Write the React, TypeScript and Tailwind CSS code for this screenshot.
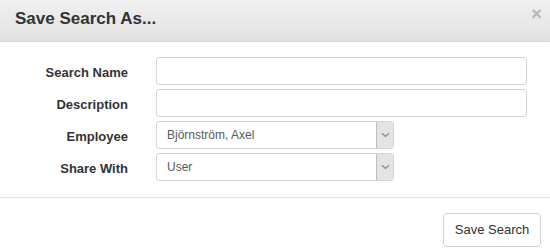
import React from "react";

const Chevron = () => (
  <svg width="9" height="6" viewBox="0 0 9 6" fill="none">
    <path d="M1 1.2 L4.5 4.5 L8 1.2" stroke="#8a8a8a" strokeWidth="1.2" />
  </svg>
);

function Row({ label, children }: { label: string; children: React.ReactNode }) {
  return (
    <div className="flex items-center h-[28px]">
      <div className="w-[128px] h-[28px] pt-[3px] flex items-center justify-end text-[13px] font-bold text-[#333]">
        {label}
      </div>
      <div className="ml-[28px]">{children}</div>
    </div>
  );
}

function TextInput() {
  return <div className="w-[371px] h-[28px] border border-[#d4d4d4] rounded-[3px] bg-white" />;
}

function Select({ value }: { value: string }) {
  return (
    <div className="w-[238px] h-[28px] border border-[#d4d4d4] rounded-[3px] bg-white flex items-stretch overflow-hidden">
      <div className="flex-1 flex items-center pl-[10px] text-[12px] text-[#5a5a5a]">{value}</div>
      <div className="w-[17px] bg-[#e4e4e4] border-l border-[#bdbdbd] flex items-center justify-center">
        <Chevron />
      </div>
    </div>
  );
}

export default function App() {
  return (
    <div className="w-[550px] h-[248px] bg-white overflow-hidden" style={{ fontFamily: '"Liberation Sans", Arial, sans-serif' }}>
      <div className="h-[42px] bg-gradient-to-b from-[#f0f0f0] to-[#e2e2e2] border-b border-[#d8d8d8] flex justify-between pl-[15px] pr-[8px]">
        <div className="pt-[9px] leading-[20px] text-[17px] font-bold text-[#333]">Save Search As...</div>
        <div className="pt-[4px] text-[19px] font-bold text-[#b8b8b8] leading-[20px]">×</div>
      </div>
      <div className="pt-[15px] pb-[16px] flex flex-col gap-[4px]">
        <Row label="Search Name"><TextInput /></Row>
        <Row label="Description"><TextInput /></Row>
        <Row label="Employee"><Select value="Björnström, Axel" /></Row>
        <Row label="Share With"><Select value="User" /></Row>
      </div>
      <div className="border-t border-[#e5e5e5] flex justify-end pt-[15px] pr-[9px]">
        <button className="h-[34px] w-[98px] border border-[#d0d0d0] rounded-[4px] bg-white text-[13px] text-[#333]">
          Save Search
        </button>
      </div>
    </div>
  );
}
